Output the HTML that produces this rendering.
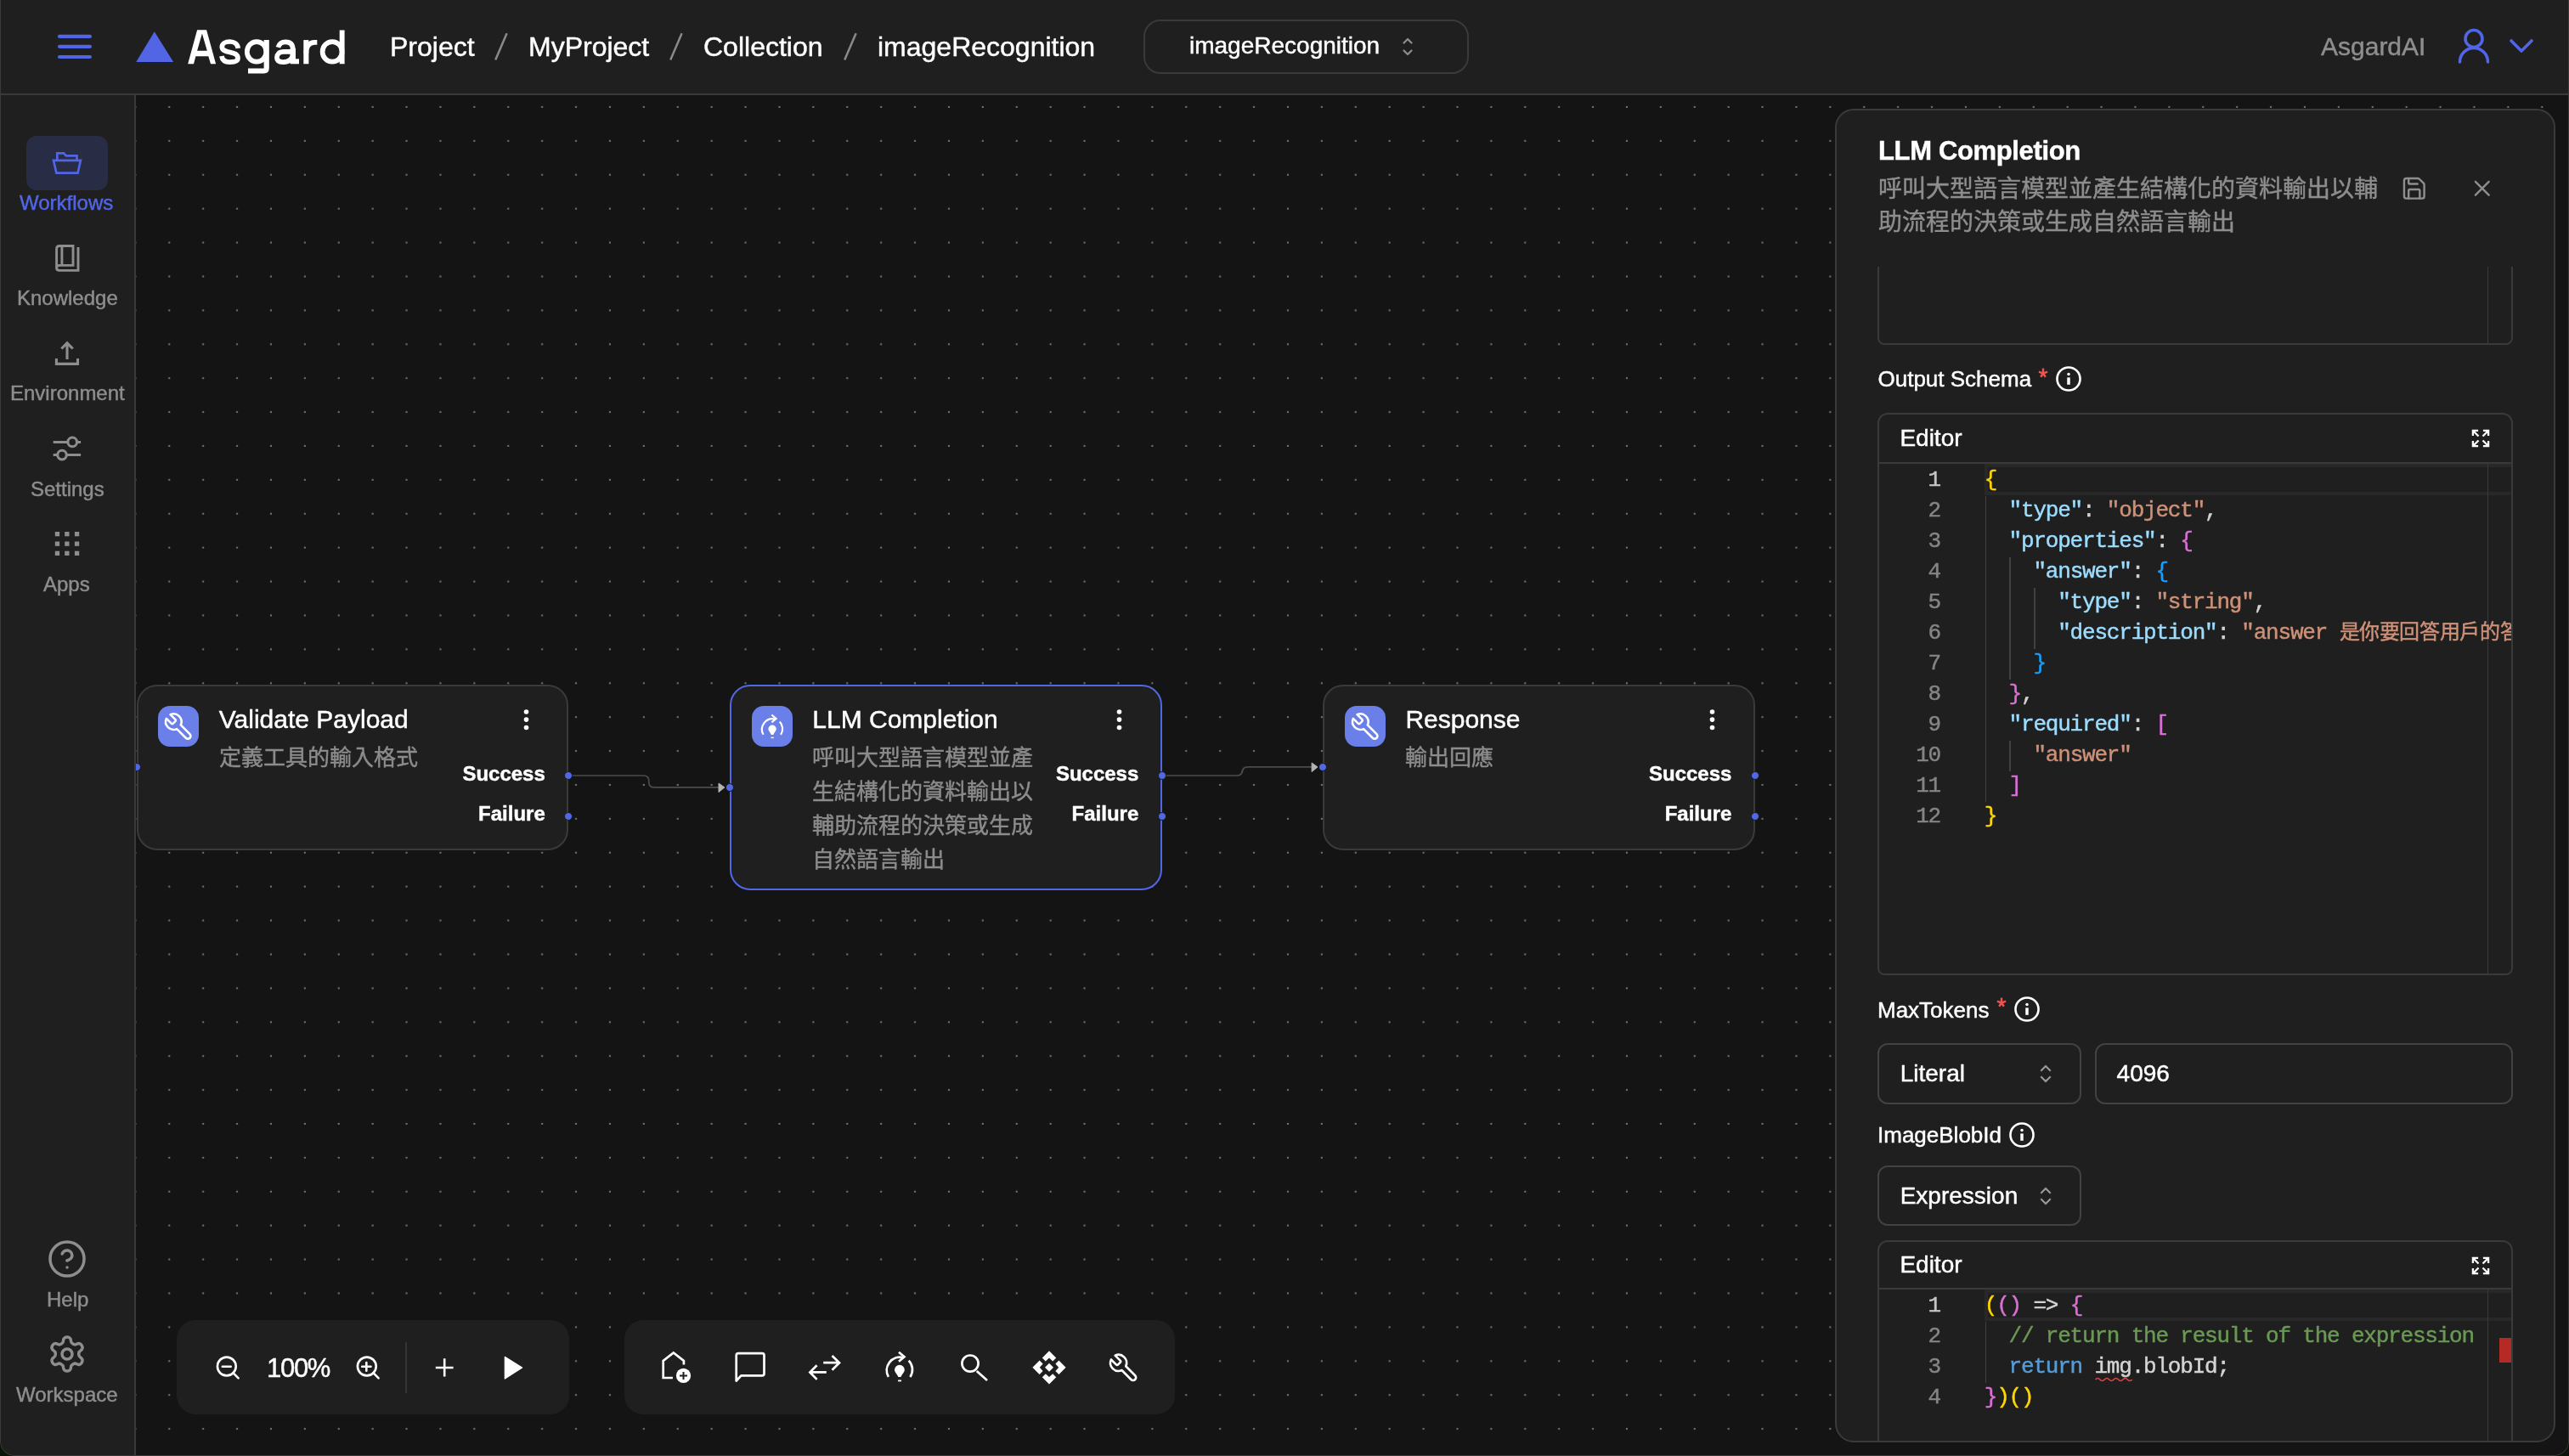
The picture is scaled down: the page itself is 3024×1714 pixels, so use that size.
<!DOCTYPE html>
<html lang="zh-TW"><head><meta charset="utf-8">
<style>
*{box-sizing:border-box;margin:0;padding:0}
html,body{width:3024px;height:1714px;overflow:hidden;background:#0b1409}
body{font-family:"Liberation Sans",sans-serif;color:#fff;position:relative;-webkit-text-stroke-width:0.45px}
.win{position:absolute;left:0;top:0;width:3024px;height:1714px;background:#141414;border-radius:0 0 17px 17px;overflow:hidden;will-change:transform}
.abs{position:absolute}
.t{position:absolute;white-space:nowrap;line-height:1}
#header{position:absolute;left:0;top:0;width:3024px;height:112px;background:#1f1f1f;border-bottom:2px solid #393939}
#sidebar{position:absolute;left:0;top:112px;width:160px;height:1602px;background:#1f1f1f;border-right:2px solid #393939}
#canvas{position:absolute;left:160px;top:112px;width:2864px;height:1602px;background:#141414}
.node{position:absolute;background:#1f1f1f;border:2px solid #3a3a3a;border-radius:24px}
.nicon{position:absolute;width:48px;height:48px;border-radius:14px;background:#6b7fe8}
.ntitle{font-size:30px;color:#fff}
.nsub{font-size:26px;color:#8c8c8c}
.port{font-size:24px;font-weight:700;color:#fff}
.dot{position:absolute;width:10px;height:10px;border-radius:50%;background:#5068e6;border:1px solid #1a1a1a}
.tb{position:absolute;background:#1f1f1f;border-radius:22px}
#panel{position:absolute;left:2160px;top:128px;width:848px;height:1570px;background:#1f1f1f;border:2px solid #3a3a3a;border-radius:22px;overflow:hidden}
.bc{font-size:32px;color:#fff}
.sl{font-size:32px;color:#8a8a8a}
.code{position:absolute;white-space:pre;overflow:hidden;font-family:"Liberation Mono",monospace;font-size:26px;letter-spacing:-1.2px;line-height:36px;color:#d4d4d4}
.ln{text-align:right;overflow:visible}
.side-lbl{font-size:24px;color:#8e8e8e}
</style></head>
<body>
<svg width="0" height="0" style="position:absolute">
<defs>
  <g id="wrench"><g transform="translate(0.5 0.5) scale(1.584) translate(-12 -12)"><path transform="translate(24 0) scale(-1 1)" d="M14.7 6.3a1 1 0 0 0 0 1.4l1.6 1.6a1 1 0 0 0 1.4 0l3.77-3.77a6 6 0 0 1-7.94 7.94l-6.91 6.91a2.12 2.12 0 0 1-3-3l6.91-6.91a6 6 0 0 1 7.94-7.94l-3.76 3.76z" fill="none" stroke="#fff" stroke-width="1.65" stroke-linecap="round" stroke-linejoin="round"/></g></g>
  <g id="bulb">
    <g fill="none" stroke="#fff" stroke-width="2.7">
      <path d="M-13 11.9 A15.5 15.5 0 0 1 4.3 -10.8"/>
      <path d="M10.9 -7.4 A15.5 15.5 0 0 1 12.6 11.9"/>
      <path d="M-0.8 -17.3 L5.7 -11.7 L-0.8 -6.2"/>
    </g>
    <path d="M0.1 -2.2 a5.9 5.9 0 0 1 5.9 5.9 c0 2.6 -2.9 4.6 -4.4 8.4 h-3 c-1.5 -3.8 -4.4 -5.8 -4.4 -8.4 a5.9 5.9 0 0 1 5.9 -5.9 z" fill="#fff"/>
    <rect x="-1.8" y="15.5" width="4" height="1.8" fill="#fff"/>
  </g>
</defs></svg>
<div class="win">
<div id="canvas">
  <svg class="abs" style="left:0;top:0" width="2864" height="1602">
    <defs><pattern id="dots" x="39.3" y="14" width="39.9" height="39.9" patternUnits="userSpaceOnUse">
      <rect x="-1.1" y="-1.1" width="2.1" height="2.1" fill="#6e6e6e"/>
      <rect x="38.8" y="-1.1" width="2.1" height="2.1" fill="#6e6e6e"/>
      <rect x="-1.1" y="38.8" width="2.1" height="2.1" fill="#6e6e6e"/>
      <rect x="38.8" y="38.8" width="2.1" height="2.1" fill="#6e6e6e"/>
    </pattern></defs>
    <rect width="2864" height="1602" fill="url(#dots)"/>
  </svg>
</div>

<div id="header">
  <svg class="abs" style="left:60px;top:34px" width="56" height="42">
    <g stroke="#5165e5" stroke-width="4.2" stroke-linecap="round"><line x1="10" y1="8.9" x2="45.9" y2="8.9"/><line x1="10" y1="20.8" x2="45.9" y2="20.8"/><line x1="10" y1="33" x2="45.9" y2="33"/></g>
  </svg>
  <svg class="abs" style="left:150px;top:30px" width="64" height="50"><polygon points="10.2,43 54.1,43 31.8,7.3" fill="#5165e5"/></svg>
  <svg class="abs" style="left:0;top:0" width="420" height="100"><g fill="#fff">
    <path fill-rule="evenodd" d="M221.15 75.25 L232.1 35.25 H243.1 L254.1 75.25 H248 L245.3 66.2 H230.4 L228 75.25 Z M237.9 39.6 L232.1 59.65 H243.8 Z"/>
    <path d="M310.6 47.1 H316.8 V80.3 Q316.8 86.5 310.6 86.5 H292 V80.5 H310.6 Z"/>
    <rect x="341.6" y="57" width="6.4" height="18.25"/>
    <rect x="347" y="69.3" width="5" height="5.95"/>
    <rect x="357.3" y="47.1" width="6.1" height="28.15"/>
    <rect x="399.7" y="35.5" width="5.9" height="39.75"/>
  </g>
  <g fill="none" stroke="#fff" stroke-width="5.7">
    <path d="M280.3 56.8 C279.6 51.8 275.6 49 270.5 49 C265 49 261.3 51.6 261.3 55.2 C261.3 59.4 265.6 60.4 270.6 61.5 C276.2 62.7 280 64 280 68.6 C280 72.6 276 73.1 270.6 73.1 C264.8 73.1 261.6 70.5 260.9 66"/>
    <ellipse cx="302.1" cy="60.9" rx="11.3" ry="11.8"/>
    <path d="M327.4 55.8 C328.6 51.2 332 49.3 336.2 49.3 C341.6 49.3 344.8 52.2 344.8 58.5"/>
    <path d="M344.8 60.9 H334.2 C328.3 60.9 325.9 64.2 325.9 67.8 C325.9 71.4 328.8 73.1 333.4 73.1 C339.6 73.1 344.8 69.5 344.8 63.5"/>
    <path d="M360.35 63 C360.35 53.5 364.8 49.9 370.2 49.9 H373.3"/>
    <ellipse cx="391.1" cy="60.9" rx="11.5" ry="11.8"/>
  </g></svg>
  <div class="t bc" style="left:459px;top:39px">Project</div>
  <svg class="abs" style="left:580px;top:37px" width="20" height="36"><line x1="3.2" y1="33.6" x2="16.6" y2="2.2" stroke="#8a8a8a" stroke-width="2.5"/></svg>
  <div class="t bc" style="left:622px;top:39px">MyProject</div>
  <svg class="abs" style="left:786px;top:37px" width="20" height="36"><line x1="3.2" y1="33.6" x2="16.6" y2="2.2" stroke="#8a8a8a" stroke-width="2.5"/></svg>
  <div class="t bc" style="left:828px;top:39px">Collection</div>
  <svg class="abs" style="left:991px;top:37px" width="20" height="36"><line x1="3.2" y1="33.6" x2="16.6" y2="2.2" stroke="#8a8a8a" stroke-width="2.5"/></svg>
  <div class="t bc" style="left:1033px;top:39px">imageRecognition</div>
  <div class="abs" style="left:1346px;top:23px;width:383px;height:64px;border:2px solid #3a3a3a;border-radius:20px"></div>
  <div class="t" style="left:1400px;top:40px;font-size:28px">imageRecognition</div>
  <svg class="abs" style="left:1645px;top:42px" width="24" height="26"><path d="M7.5 8.5 L12 4 L16.5 8.5 M7.5 17.5 L12 22 L16.5 17.5" fill="none" stroke="#8e8e8e" stroke-width="2.2" stroke-linecap="round" stroke-linejoin="round"/></svg>
  <div class="t" style="left:2732px;top:40px;font-size:30px;color:#8e8e8e">AsgardAI</div>
  <svg class="abs" style="left:2890px;top:32px" width="44" height="46"><circle cx="22" cy="13.5" r="10" fill="none" stroke="#5165e5" stroke-width="3.6"/><path d="M5.5 41 A16.5 16.5 0 0 1 38.5 41" fill="none" stroke="#5165e5" stroke-width="3.6" stroke-linecap="round"/></svg>
  <svg class="abs" style="left:2950px;top:42px" width="36" height="26"><path d="M6 6 L18 18 L30 6" fill="none" stroke="#5165e5" stroke-width="3.6" stroke-linecap="round" stroke-linejoin="round"/></svg>
</div>
<div id="sidebar">
  <div class="abs" style="left:31px;top:48px;width:96px;height:64px;border-radius:12px;background:#282c45"></div>
  <svg class="abs" style="left:55px;top:58px" width="50" height="45"><path d="M12.3 18.8 V10.4 H20 L22.8 13.4 H35.5 V18.8 M8 18.8 H39.9 L36.6 33.6 H11.4 Z" fill="none" stroke="#5165e5" stroke-width="2.7" stroke-linejoin="miter"/></svg>
  <div class="t side-lbl" style="left:23px;top:115px;color:#5165e5">Workflows</div>
  <svg class="abs" style="left:55px;top:168px" width="50" height="50"><path d="M11.6 35.5 V12.8 Q11.6 9.5 14.9 9.5 H31 V32.4 H15 Q11.6 32.4 11.6 35.5 Q11.6 38.4 15 38.4 H37 V11 M17.9 9.5 V32.4" fill="none" stroke="#8e8e8e" stroke-width="2.9"/></svg>
  <div class="t side-lbl" style="left:20px;top:227px">Knowledge</div>
  <svg class="abs" style="left:55px;top:283px" width="50" height="45"><path d="M24 28 V9 M17.3 15.5 L24 8.8 L30.7 15.5 M11.4 26.9 V33.4 H36.5 V26.9" fill="none" stroke="#8e8e8e" stroke-width="3.1"/></svg>
  <div class="t side-lbl" style="left:12px;top:339px">Environment</div>
  <svg class="abs" style="left:55px;top:395px" width="50" height="45"><g fill="none" stroke="#8e8e8e" stroke-width="3"><path d="M7.7 13.4 H24.5 M35.8 13.4 H40.1 M7.7 28.6 H12.3 M23.6 28.6 H40.1"/><circle cx="30.2" cy="13.4" r="5.3"/><circle cx="18" cy="28.6" r="5.3"/></g></svg>
  <div class="t side-lbl" style="left:36px;top:452px">Settings</div>
  <svg class="abs" style="left:60px;top:510px" width="40" height="40"><g fill="#8e8e8e"><rect x="4.8" y="4" width="5.3" height="5.3"/><rect x="16.2" y="4" width="5.3" height="5.3"/><rect x="27.9" y="4" width="5.3" height="5.3"/><rect x="4.8" y="15.5" width="5.3" height="5.3"/><rect x="16.2" y="15.5" width="5.3" height="5.3"/><rect x="27.9" y="15.5" width="5.3" height="5.3"/><rect x="4.8" y="26.7" width="5.3" height="5.3"/><rect x="16.2" y="26.7" width="5.3" height="5.3"/><rect x="27.9" y="26.7" width="5.3" height="5.3"/></g></svg>
  <div class="t side-lbl" style="left:51px;top:564px">Apps</div>
  <svg class="abs" style="left:55px;top:1346px" width="48" height="48" viewBox="0 0 24 24"><g fill="none" stroke="#8e8e8e" stroke-width="1.75" stroke-linecap="round" stroke-linejoin="round"><circle cx="12" cy="12" r="10"/><path d="M9.09 9a3 3 0 0 1 5.83 1c0 2-3 3-3 3"/><path d="M12 17h.01"/></g></svg>
  <div class="t side-lbl" style="left:55px;top:1406px">Help</div>
  <svg class="abs" style="left:55px;top:1458px" width="48" height="48" viewBox="0 0 24 24"><g fill="none" stroke="#8e8e8e" stroke-width="1.75" stroke-linecap="round" stroke-linejoin="round"><path d="M12.22 2h-.44a2 2 0 0 0-2 2v.18a2 2 0 0 1-1 1.73l-.43.25a2 2 0 0 1-2 0l-.15-.08a2 2 0 0 0-2.73.73l-.22.38a2 2 0 0 0 .73 2.73l.15.1a2 2 0 0 1 1 1.72v.51a2 2 0 0 1-1 1.74l-.15.09a2 2 0 0 0-.73 2.73l.22.38a2 2 0 0 0 2.73.73l.15-.08a2 2 0 0 1 2 0l.43.25a2 2 0 0 1 1 1.73V20a2 2 0 0 0 2 2h.44a2 2 0 0 0 2-2v-.18a2 2 0 0 1 1-1.73l.43-.25a2 2 0 0 1 2 0l.15.08a2 2 0 0 0 2.73-.73l.22-.39a2 2 0 0 0-.73-2.73l-.15-.08a2 2 0 0 1-1-1.74v-.5a2 2 0 0 1 1-1.74l.15-.09a2 2 0 0 0 .73-2.73l-.22-.38a2 2 0 0 0-2.73-.73l-.15.08a2 2 0 0 1-2 0l-.43-.25a2 2 0 0 1-1-1.73V4a2 2 0 0 0-2-2z"/><circle cx="12" cy="12" r="3"/></g></svg>
  <div class="t side-lbl" style="left:19px;top:1518px">Workspace</div>
</div>

<!-- NODES -->
<svg class="abs" style="left:0;top:0;overflow:visible" width="3024" height="1714">
  <path d="M669.2 913 H757.3 Q763.8 913 763.8 919.5 V920.4 Q763.8 926.9 770.3 926.9 H848" fill="none" stroke="#4b4b4b" stroke-width="1.7"/>
  <polygon points="846,922 852.9,926.9 846,932.6" fill="#b3b3b3" stroke="#b3b3b3" stroke-width="1" stroke-linejoin="round"/>
  <path d="M1367.7 913 H1455.8 Q1462.3 913 1462.3 906.5 V909.4 Q1462.3 902.9 1468.8 902.9 H1546" fill="none" stroke="#4b4b4b" stroke-width="1.7"/>
  <polygon points="1544.1,898 1551,902.9 1544.1,908.6" fill="#b3b3b3" stroke="#b3b3b3" stroke-width="1" stroke-linejoin="round"/>
</svg>
<div class="node" style="left:160.8px;top:805.6px;width:508.4px;height:195px;border-color:#3a3a3a"></div>
<div class="nicon" style="left:186.3px;top:831px"></div>
<svg class="abs" style="left:186.3px;top:831px;overflow:visible" width="48" height="48"><use href="#wrench" transform="translate(24 24.3) scale(0.975)"/></svg>
<div class="t ntitle" style="left:257.8px;top:832px">Validate Payload</div>
<div class="abs nsub" style="left:257.8px;top:871.6px;width:270px;line-height:40px">定義工具的輸入格式</div>
<svg class="abs" style="left:610.8px;top:830px" width="18" height="34"><g fill="#fff"><circle cx="8.5" cy="8" r="2.8"/><circle cx="8.5" cy="17.1" r="2.8"/><circle cx="8.5" cy="26.5" r="2.8"/></g></svg>
<div class="t port" style="left:541.8px;top:899px;width:100px;text-align:right">Success</div>
<div class="t port" style="left:541.8px;top:946px;width:100px;text-align:right">Failure</div>
<div class="dot" style="left:664.0px;top:907.8px"></div>
<div class="dot" style="left:664.0px;top:955.5999999999999px"></div>
<div class="abs" style="left:160px;top:895.1px;width:10px;height:16px;overflow:hidden"><div class="dot" style="left:-4.399999999999977px;top:2.8px"></div></div>
<div class="node" style="left:859.3px;top:805.6px;width:508.4px;height:242.4px;border-color:#5167e5"></div>
<div class="nicon" style="left:884.8px;top:831px"></div>
<svg class="abs" style="left:884.8px;top:831px;overflow:visible" width="48" height="48"><use href="#bulb" transform="translate(24 24.3) scale(0.8)"/></svg>
<div class="t ntitle" style="left:956.3px;top:832px">LLM Completion</div>
<div class="abs nsub" style="left:956.3px;top:871.6px;width:270px;line-height:40px">呼叫大型語言模型並產生結構化的資料輸出以輔助流程的決策或生成自然語言輸出</div>
<svg class="abs" style="left:1309.3px;top:830px" width="18" height="34"><g fill="#fff"><circle cx="8.5" cy="8" r="2.8"/><circle cx="8.5" cy="17.1" r="2.8"/><circle cx="8.5" cy="26.5" r="2.8"/></g></svg>
<div class="t port" style="left:1240.3px;top:899px;width:100px;text-align:right">Success</div>
<div class="t port" style="left:1240.3px;top:946px;width:100px;text-align:right">Failure</div>
<div class="dot" style="left:1362.4999999999998px;top:907.8px"></div>
<div class="dot" style="left:1362.4999999999998px;top:955.5999999999999px"></div>
<div class="dot" style="left:854.0999999999999px;top:921.6px"></div>
<div class="node" style="left:1557.4px;top:805.6px;width:508.4px;height:195px;border-color:#3a3a3a"></div>
<div class="nicon" style="left:1582.9px;top:831px"></div>
<svg class="abs" style="left:1582.9px;top:831px;overflow:visible" width="48" height="48"><use href="#wrench" transform="translate(24 24.3) scale(0.975)"/></svg>
<div class="t ntitle" style="left:1654.4px;top:832px">Response</div>
<div class="abs nsub" style="left:1654.4px;top:871.6px;width:270px;line-height:40px">輸出回應</div>
<svg class="abs" style="left:2007.4px;top:830px" width="18" height="34"><g fill="#fff"><circle cx="8.5" cy="8" r="2.8"/><circle cx="8.5" cy="17.1" r="2.8"/><circle cx="8.5" cy="26.5" r="2.8"/></g></svg>
<div class="t port" style="left:1938.4px;top:899px;width:100px;text-align:right">Success</div>
<div class="t port" style="left:1938.4px;top:946px;width:100px;text-align:right">Failure</div>
<div class="dot" style="left:2060.6000000000004px;top:907.8px"></div>
<div class="dot" style="left:2060.6000000000004px;top:955.5999999999999px"></div>
<div class="dot" style="left:1552.2px;top:897.9px"></div>

<!-- TOOLBARS -->
<div class="tb" style="left:208px;top:1554px;width:462px;height:111px"></div>
<svg class="abs" style="left:240px;top:1580px" width="440" height="60"><g fill="none" stroke="#fff" stroke-width="2.6" stroke-linecap="round">
  <circle cx="26.8" cy="28.5" r="10.9"/><path d="M34.4 36.1 L40.6 42.3 M21.8 28.7 H31.7"/>
  <circle cx="191.8" cy="28.5" r="10.9"/><path d="M199.4 36.1 L205.6 42.3 M186.2 28.7 H196.5 M191.3 24 V33.8"/>
  <path d="M272.8 30 H293.6 M283.2 19.2 V40.6" stroke-linecap="butt"/>
  </g>
  <line x1="238" y1="-2" x2="238" y2="62" stroke="#353535" stroke-width="2"/>
  <path d="M354.3 17.3 L374.6 30 L354.3 43 Z" fill="#fff" stroke="#fff" stroke-width="1.2" stroke-linejoin="round"/>
</svg>
<div class="t" style="left:314px;top:1595px;font-size:31px;letter-spacing:-1.3px">100%</div>
<div class="tb" style="left:735px;top:1554px;width:648px;height:111px"></div>
<svg class="abs" style="left:760px;top:1580px" width="600" height="60"><g fill="none" stroke="#fff" stroke-width="2.7">
  <path d="M31.9 42 H20.7 V21.9 L32.8 12.5 L44.9 21.9 V26.4"/>
  <circle cx="44.5" cy="39.4" r="8.6" fill="#fff" stroke="none"/>
  <path d="M40 39.4 H49 M44.5 34.9 V43.9" stroke="#1f1f1f" stroke-width="2"/>
  <path d="M106.7 45.5 V15.6 Q106.7 13.2 109.1 13.2 H137.1 Q139.5 13.2 139.5 15.6 V37 Q139.5 39.4 137.1 39.4 H112.4 L106.7 45.5 Z" stroke-linejoin="round"/>
  <path d="M209.2 24.2 H228.4 M219.5 16 L228 24.2 L219.5 32.7 M212.8 35.4 H193.2 M201.6 27.3 L193.4 35.4 L201.6 43.9"/>
  <circle cx="382" cy="25.1" r="9.6"/><path d="M389.7 33.9 L402 45"/>
  </g>
  <use href="#bulb" transform="translate(298.8 29)"/>
  <g fill="#fff" transform="translate(475 29.8)">
    <polygon points="0,-19.6 8.2,-11.4 4.2,-7.4 0,-11.2 -4.2,-7.4 -8.2,-11.4"/>
    <polygon points="0,-19.6 8.2,-11.4 4.2,-7.4 0,-11.2 -4.2,-7.4 -8.2,-11.4" transform="rotate(90)"/>
    <polygon points="0,-19.6 8.2,-11.4 4.2,-7.4 0,-11.2 -4.2,-7.4 -8.2,-11.4" transform="rotate(180)"/>
    <polygon points="0,-19.6 8.2,-11.4 4.2,-7.4 0,-11.2 -4.2,-7.4 -8.2,-11.4" transform="rotate(270)"/>
    <polygon points="0,-5 5,0 0,5 -5,0"/>
  </g>
  <use href="#wrench" transform="translate(562.4 30.2)"/>
</svg>


<div id="panel">
<div class="t" style="left:49px;top:32.2px;font-size:31px;font-weight:700;letter-spacing:-0.35px">LLM Completion</div>
<div class="abs" style="left:48.5px;top:73px;width:600px;font-size:28px;line-height:39.3px;color:#8e8e8e">呼叫大型語言模型並產生結構化的資料輸出以輔助流程的決策或生成自然語言輸出</div>
<svg class="abs" style="left:664.2px;top:76.3px;overflow:visible" width="31.56" height="31.56" viewBox="0 0 24 24"><g fill="none" stroke="#8e8e8e" stroke-width="1.85" stroke-linecap="round" stroke-linejoin="round"><path d="M15.2 3a2 2 0 0 1 1.4.6l3.8 3.8a2 2 0 0 1 .6 1.4V19a2 2 0 0 1-2 2H5a2 2 0 0 1-2-2V5a2 2 0 0 1 2-2z"/><path d="M17 21v-7a1 1 0 0 0-1-1H8a1 1 0 0 0-1 1v7"/><path d="M7 3v4a1 1 0 0 0 1 1h7"/></g></svg>
<svg class="abs" style="left:744.2px;top:76.3px;overflow:visible" width="31.56" height="31.56" viewBox="0 0 24 24"><path d="M18 6 6 18 M6 6l12 12" fill="none" stroke="#8e8e8e" stroke-width="1.85" stroke-linecap="round"/></svg>
<div class="abs" style="left:0;top:184px;width:844px;height:1382px;overflow:hidden">
<div class="abs" style="left:48px;top:-114px;width:748px;height:206px;border:2px solid #3a3a3a;border-radius:0 0 8px 8px"></div>
<div class="abs" style="left:765.8px;top:-14px;width:1.3px;height:104px;background:#3a3a3a"></div>
<div class="t" style="left:48.5px;top:119px;font-size:26px">Output Schema</div>
<svg class="abs" style="left:237.2px;top:118.6px;overflow:visible" width="12" height="12" ><g stroke="#ef5350" stroke-width="2.5"><line x1="6" y1="0.6" x2="6" y2="6.8"/><line x1="0.9" y1="4.6" x2="6" y2="6.6"/><line x1="11.1" y1="4.6" x2="6" y2="6.6"/><line x1="3.2" y1="10.8" x2="6.1" y2="6.4"/><line x1="8.8" y1="10.8" x2="5.9" y2="6.4"/></g></svg>
<svg class="abs" style="left:258px;top:117px;overflow:visible" width="30" height="30" ><circle cx="15" cy="15" r="13.55" fill="none" stroke="#fff" stroke-width="2.6"/><circle cx="15" cy="9.6" r="1.75" fill="#fff"/><rect x="13.25" y="13.4" width="3.5" height="8.4" fill="#fff"/></svg>
<div class="abs" style="left:48px;top:172.4px;width:748px;height:661.6px;border:2px solid #3a3a3a;border-radius:12px 12px 8px 8px"></div>
<div class="abs" style="left:50px;top:230px;width:744px;height:2px;background:#3a3a3a"></div>
<div class="t" style="left:74.4px;top:187.9px;font-size:28px">Editor</div>
<svg class="abs" style="left:748px;top:192.2px;overflow:visible" width="20" height="20" ><path d="M0.9 7.1 V0.9 H7.1 M1.5 1.5 L7.5 7.5 M12.9 0.9 H19.1 V7.1 M18.5 1.5 L12.5 7.5 M0.9 12.9 V19.1 H7.1 M1.5 18.5 L7.5 12.5 M19.1 12.9 V19.1 H12.9 M18.5 18.5 L12.5 12.5" fill="none" stroke="#fff" stroke-width="2.3"/></svg>
<div class="abs" style="left:174px;top:232px;width:620px;height:37px;border:4px solid #282828;border-right:none"></div>
<div class="abs" style="left:174.6px;top:270px;width:1.8px;height:360px;background:#404040"></div>
<div class="abs" style="left:203.4px;top:342px;width:1.8px;height:144px;background:#404040"></div>
<div class="abs" style="left:203.4px;top:558px;width:1.8px;height:36px;background:#404040"></div>
<div class="abs" style="left:232.2px;top:378px;width:1.8px;height:72px;background:#404040"></div>
<div class="abs" style="left:765.6px;top:232px;width:1.6px;height:600px;background:#3a3a3a"></div>
<div class="code ln" style="left:38px;top:232.5px;width:84px;color:#c6c6c6">1</div>
<div class="code" style="left:173.8px;top:232.5px;width:620.2px"><span style="color:#ffd700">{</span></div>
<div class="code ln" style="left:38px;top:268.5px;width:84px;color:#858585">2</div>
<div class="code" style="left:173.8px;top:268.5px;width:620.2px">  <span style="color:#9cdcfe">"type"</span>: <span style="color:#ce9178">"object"</span>,</div>
<div class="code ln" style="left:38px;top:304.5px;width:84px;color:#858585">3</div>
<div class="code" style="left:173.8px;top:304.5px;width:620.2px">  <span style="color:#9cdcfe">"properties"</span>: <span style="color:#da70d6">{</span></div>
<div class="code ln" style="left:38px;top:340.5px;width:84px;color:#858585">4</div>
<div class="code" style="left:173.8px;top:340.5px;width:620.2px">    <span style="color:#9cdcfe">"answer"</span>: <span style="color:#179fff">{</span></div>
<div class="code ln" style="left:38px;top:376.5px;width:84px;color:#858585">5</div>
<div class="code" style="left:173.8px;top:376.5px;width:620.2px">      <span style="color:#9cdcfe">"type"</span>: <span style="color:#ce9178">"string"</span>,</div>
<div class="code ln" style="left:38px;top:412.5px;width:84px;color:#858585">6</div>
<div class="code" style="left:173.8px;top:412.5px;width:620.2px">      <span style="color:#9cdcfe">"description"</span>: <span style="color:#ce9178">"answer <span style="font-size:24px;letter-spacing:-0.35px">是你要回答用戶的答案</span>"</span></div>
<div class="code ln" style="left:38px;top:448.5px;width:84px;color:#858585">7</div>
<div class="code" style="left:173.8px;top:448.5px;width:620.2px">    <span style="color:#179fff">}</span></div>
<div class="code ln" style="left:38px;top:484.5px;width:84px;color:#858585">8</div>
<div class="code" style="left:173.8px;top:484.5px;width:620.2px">  <span style="color:#da70d6">}</span>,</div>
<div class="code ln" style="left:38px;top:520.5px;width:84px;color:#858585">9</div>
<div class="code" style="left:173.8px;top:520.5px;width:620.2px">  <span style="color:#9cdcfe">"required"</span>: <span style="color:#da70d6">[</span></div>
<div class="code ln" style="left:38px;top:556.5px;width:84px;color:#858585">10</div>
<div class="code" style="left:173.8px;top:556.5px;width:620.2px">    <span style="color:#ce9178">"answer"</span></div>
<div class="code ln" style="left:38px;top:592.5px;width:84px;color:#858585">11</div>
<div class="code" style="left:173.8px;top:592.5px;width:620.2px">  <span style="color:#da70d6">]</span></div>
<div class="code ln" style="left:38px;top:628.5px;width:84px;color:#858585">12</div>
<div class="code" style="left:173.8px;top:628.5px;width:620.2px"><span style="color:#ffd700">}</span></div>
<div class="t" style="left:48px;top:861.5px;font-size:26px">MaxTokens</div>
<svg class="abs" style="left:187.7px;top:860.2px;overflow:visible" width="12" height="12" ><g stroke="#ef5350" stroke-width="2.5"><line x1="6" y1="0.6" x2="6" y2="6.8"/><line x1="0.9" y1="4.6" x2="6" y2="6.6"/><line x1="11.1" y1="4.6" x2="6" y2="6.6"/><line x1="3.2" y1="10.8" x2="6.1" y2="6.4"/><line x1="8.8" y1="10.8" x2="5.9" y2="6.4"/></g></svg>
<svg class="abs" style="left:208.5px;top:858.8px;overflow:visible" width="30" height="30" ><circle cx="15" cy="15" r="13.55" fill="none" stroke="#fff" stroke-width="2.6"/><circle cx="15" cy="9.6" r="1.75" fill="#fff"/><rect x="13.25" y="13.4" width="3.5" height="8.4" fill="#fff"/></svg>
<div class="abs" style="left:48px;top:914px;width:240px;height:71.5px;border:2px solid #424242;border-radius:12px"></div>
<div class="t" style="left:74.7px;top:936px;font-size:28px">Literal</div>
<svg class="abs" style="left:238px;top:938px;overflow:visible" width="16" height="24" ><path d="M2.3 8.7 L8 3 L13.7 8.7 M2.3 15.3 L8 21 L13.7 15.3" fill="none" stroke="#9a9a9a" stroke-width="2.1"/></svg>
<div class="abs" style="left:304px;top:914px;width:492px;height:71.5px;border:2px solid #424242;border-radius:12px"></div>
<div class="t" style="left:329.6px;top:936px;font-size:28px">4096</div>
<div class="t" style="left:48px;top:1009px;font-size:26px">ImageBlobId</div>
<svg class="abs" style="left:202.5px;top:1007px;overflow:visible" width="30" height="30" ><circle cx="15" cy="15" r="13.55" fill="none" stroke="#fff" stroke-width="2.6"/><circle cx="15" cy="9.6" r="1.75" fill="#fff"/><rect x="13.25" y="13.4" width="3.5" height="8.4" fill="#fff"/></svg>
<div class="abs" style="left:48px;top:1057.5px;width:240px;height:71.5px;border:2px solid #424242;border-radius:12px"></div>
<div class="t" style="left:74.7px;top:1079.5px;font-size:28px">Expression</div>
<svg class="abs" style="left:238px;top:1081.5px;overflow:visible" width="16" height="24" ><path d="M2.3 8.7 L8 3 L13.7 8.7 M2.3 15.3 L8 21 L13.7 15.3" fill="none" stroke="#9a9a9a" stroke-width="2.1"/></svg>
<div class="abs" style="left:48px;top:1145.7px;width:748px;height:300.3px;border:2px solid #3a3a3a;border-radius:12px 12px 8px 8px"></div>
<div class="abs" style="left:50px;top:1202px;width:744px;height:2px;background:#3a3a3a"></div>
<div class="t" style="left:74.4px;top:1161.2px;font-size:28px">Editor</div>
<svg class="abs" style="left:748px;top:1165.5px;overflow:visible" width="20" height="20" ><path d="M0.9 7.1 V0.9 H7.1 M1.5 1.5 L7.5 7.5 M12.9 0.9 H19.1 V7.1 M18.5 1.5 L12.5 7.5 M0.9 12.9 V19.1 H7.1 M1.5 18.5 L7.5 12.5 M19.1 12.9 V19.1 H12.9 M18.5 18.5 L12.5 12.5" fill="none" stroke="#fff" stroke-width="2.3"/></svg>
<div class="abs" style="left:174px;top:1204px;width:620px;height:37px;border:4px solid #282828;border-right:none"></div>
<div class="abs" style="left:174.6px;top:1242px;width:1.8px;height:72px;background:#404040"></div>
<div class="abs" style="left:765.6px;top:1204px;width:1.6px;height:240px;background:#3a3a3a"></div>
<div class="code ln" style="left:38px;top:1204.5px;width:84px;color:#c6c6c6">1</div>
<div class="code" style="left:173.8px;top:1204.5px;width:620.2px"><span style="color:#ffd700">(</span><span style="color:#da70d6">()</span> =&gt; <span style="color:#da70d6">{</span></div>
<div class="code ln" style="left:38px;top:1240.5px;width:84px;color:#858585">2</div>
<div class="code" style="left:173.8px;top:1240.5px;width:620.2px">  <span style="color:#6a9955">// return the result of the expression</span></div>
<div class="code ln" style="left:38px;top:1276.5px;width:84px;color:#858585">3</div>
<div class="code" style="left:173.8px;top:1276.5px;width:620.2px">  <span style="color:#569cd6">return</span> img.blobId;</div>
<div class="code ln" style="left:38px;top:1312.5px;width:84px;color:#858585">4</div>
<div class="code" style="left:173.8px;top:1312.5px;width:620.2px"><span style="color:#da70d6">}</span><span style="color:#ffd700">)</span><span style="color:#ffd700">()</span></div>
<svg class="abs" style="left:303.5px;top:1306.5px;overflow:visible" width="45" height="8" ><path d="M0.5 3 Q3.2 0 5.9 3 T11.3 3 T16.7 3 T22.1 3 T27.5 3 T32.9 3 T38.3 3 T43.7 3" fill="none" stroke="#e0443e" stroke-width="1.7"/></svg>
<div class="abs" style="left:780px;top:1260.7px;width:14px;height:28.9px;background:#b52a24"></div>
</div>
</div>
<div class="abs" style="left:0;top:0;width:3024px;height:1714px;border:1px solid #3a3a3a;border-top:none;border-radius:0 0 17px 17px;pointer-events:none"></div>
</div>
</body></html>
